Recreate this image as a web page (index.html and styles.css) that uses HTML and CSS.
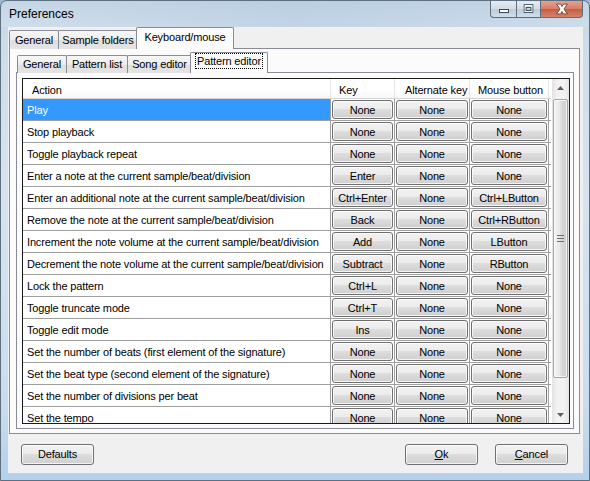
FILE: index.html
```html
<!DOCTYPE html>
<html>
<head>
<meta charset="utf-8">
<link rel="stylesheet" href="styles.css">
</head>
<body>
<div class="window">
  <div class="titlebar">
    <span class="title">Preferences</span>
    <div class="caption">
      <div class="cbtn cmin"><svg width="25" height="18" viewBox="0 0 25 18"><rect x="8.5" y="9.5" width="9" height="3" fill="#fff" stroke="#3c4650"/></svg></div>
      <div class="cbtn cmax"><svg width="24" height="18" viewBox="0 0 24 18"><rect x="7.5" y="4.5" width="9" height="8" fill="none" stroke="#3c4650"/><rect x="8.5" y="5.5" width="7" height="6" fill="none" stroke="#fff"/><rect x="9.5" y="7.5" width="5" height="3" fill="none" stroke="#3c4650"/></svg></div>
      <div class="cbtn cclose"><svg width="42" height="18" viewBox="0 0 42 18"><path d="M16 4 L20 4 L21.5 6.5 L23 4 L27 4 L23.5 9 L27 14 L23 14 L21.5 11.5 L20 14 L16 14 L19.5 9 Z" fill="#fff" stroke="#5a2a22" stroke-width="0.8"/></svg></div>
    </div>
  </div>
  <div class="client">
    <div class="tabs outer-tabs">
      <div class="tab w-gen">General</div>
      <div class="tab w-sf">Sample folders</div>
      <div class="tab sel w-km">Keyboard/mouse</div>
    </div>
    <div class="panel outer-panel">
      <div class="tabs inner-tabs">
        <div class="tab w-igen">General</div>
        <div class="tab w-pl">Pattern list</div>
        <div class="tab w-se">Song editor</div>
        <div class="tab sel w-pe"><span class="focus">Pattern editor</span></div>
      </div>
      <div class="panel inner-panel">
        <div class="table">
          <div class="list">
            <div class="row head">
              <div class="cell c-act h-act">Action</div>
              <div class="cell c-key h-key">Key</div>
              <div class="cell c-alt h-alt">Alternate key</div>
              <div class="cell c-mou h-mou">Mouse button</div>
            </div>
            <div class="row">
              <div class="cell c-act selected">Play</div>
              <div class="cell c-key"><span class="btn">None</span></div>
              <div class="cell c-alt"><span class="btn">None</span></div>
              <div class="cell c-mou"><span class="btn">None</span></div>
            </div>
            <div class="row">
              <div class="cell c-act">Stop playback</div>
              <div class="cell c-key"><span class="btn">None</span></div>
              <div class="cell c-alt"><span class="btn">None</span></div>
              <div class="cell c-mou"><span class="btn">None</span></div>
            </div>
            <div class="row">
              <div class="cell c-act">Toggle playback repeat</div>
              <div class="cell c-key"><span class="btn">None</span></div>
              <div class="cell c-alt"><span class="btn">None</span></div>
              <div class="cell c-mou"><span class="btn">None</span></div>
            </div>
            <div class="row">
              <div class="cell c-act">Enter a note at the current sample/beat/division</div>
              <div class="cell c-key"><span class="btn">Enter</span></div>
              <div class="cell c-alt"><span class="btn">None</span></div>
              <div class="cell c-mou"><span class="btn">None</span></div>
            </div>
            <div class="row">
              <div class="cell c-act">Enter an additional note at the current sample/beat/division</div>
              <div class="cell c-key"><span class="btn">Ctrl+Enter</span></div>
              <div class="cell c-alt"><span class="btn">None</span></div>
              <div class="cell c-mou"><span class="btn">Ctrl+LButton</span></div>
            </div>
            <div class="row">
              <div class="cell c-act">Remove the note at the current sample/beat/division</div>
              <div class="cell c-key"><span class="btn">Back</span></div>
              <div class="cell c-alt"><span class="btn">None</span></div>
              <div class="cell c-mou"><span class="btn">Ctrl+RButton</span></div>
            </div>
            <div class="row">
              <div class="cell c-act">Increment the note volume at the current sample/beat/division</div>
              <div class="cell c-key"><span class="btn">Add</span></div>
              <div class="cell c-alt"><span class="btn">None</span></div>
              <div class="cell c-mou"><span class="btn">LButton</span></div>
            </div>
            <div class="row">
              <div class="cell c-act">Decrement the note volume at the current sample/beat/division</div>
              <div class="cell c-key"><span class="btn">Subtract</span></div>
              <div class="cell c-alt"><span class="btn">None</span></div>
              <div class="cell c-mou"><span class="btn">RButton</span></div>
            </div>
            <div class="row">
              <div class="cell c-act">Lock the pattern</div>
              <div class="cell c-key"><span class="btn">Ctrl+L</span></div>
              <div class="cell c-alt"><span class="btn">None</span></div>
              <div class="cell c-mou"><span class="btn">None</span></div>
            </div>
            <div class="row">
              <div class="cell c-act">Toggle truncate mode</div>
              <div class="cell c-key"><span class="btn">Ctrl+T</span></div>
              <div class="cell c-alt"><span class="btn">None</span></div>
              <div class="cell c-mou"><span class="btn">None</span></div>
            </div>
            <div class="row">
              <div class="cell c-act">Toggle edit mode</div>
              <div class="cell c-key"><span class="btn">Ins</span></div>
              <div class="cell c-alt"><span class="btn">None</span></div>
              <div class="cell c-mou"><span class="btn">None</span></div>
            </div>
            <div class="row">
              <div class="cell c-act">Set the number of beats (first element of the signature)</div>
              <div class="cell c-key"><span class="btn">None</span></div>
              <div class="cell c-alt"><span class="btn">None</span></div>
              <div class="cell c-mou"><span class="btn">None</span></div>
            </div>
            <div class="row">
              <div class="cell c-act">Set the beat type (second element of the signature)</div>
              <div class="cell c-key"><span class="btn">None</span></div>
              <div class="cell c-alt"><span class="btn">None</span></div>
              <div class="cell c-mou"><span class="btn">None</span></div>
            </div>
            <div class="row">
              <div class="cell c-act">Set the number of divisions per beat</div>
              <div class="cell c-key"><span class="btn">None</span></div>
              <div class="cell c-alt"><span class="btn">None</span></div>
              <div class="cell c-mou"><span class="btn">None</span></div>
            </div>
            <div class="row">
              <div class="cell c-act">Set the tempo</div>
              <div class="cell c-key"><span class="btn">None</span></div>
              <div class="cell c-alt"><span class="btn">None</span></div>
              <div class="cell c-mou"><span class="btn">None</span></div>
            </div>
          </div>
          <div class="scrollbar">
            <div class="sb-arrow"><svg width="7" height="4" viewBox="0 0 7 4"><path d="M0 4 L3.5 0 L7 4 Z" fill="#606060"/></svg></div>
            <div class="sb-track">
              <div class="sb-thumb">
                <svg width="7" height="7" viewBox="0 0 7 7"><path d="M0 0.5 H7 M0 3.5 H7 M0 6.5 H7" stroke="#6e6e6e" stroke-width="1"/></svg>
              </div>
            </div>
            <div class="sb-arrow"><svg width="7" height="4" viewBox="0 0 7 4"><path d="M0 0 L3.5 4 L7 0 Z" fill="#606060"/></svg></div>
          </div>
        </div>
      </div>
    </div>
    <div class="footer">
      <button class="pbtn">Defaults</button>
      <div class="spacer"></div>
      <button class="pbtn"><u>O</u>k</button>
      <button class="pbtn"><u>C</u>ancel</button>
    </div>
  </div>
</div>
</body>
</html>
```

FILE: styles.css
```css
* { box-sizing: border-box; }
html, body { margin: 0; padding: 0; }
body {
  width: 590px;
  height: 481px;
  overflow: hidden;
  background: #9fb9d2;
  font-family: "Liberation Sans", Arial, sans-serif;
  font-size: 11px;
  letter-spacing: -0.15px;
  color: #000;
}
.window {
  width: 590px;
  height: 481px;
  border: 1px solid #5e6f80;
  border-radius: 7px 7px 0 0;
  background: linear-gradient(to bottom, #bcd0e3 0%, #cddcea 8%, #d7e4f0 40%, #c9dcee 85%, #b5d0ea 100%);
  display: flex;
  flex-direction: column;
  overflow: hidden;
}
.titlebar {
  height: 26px;
  display: flex;
  justify-content: space-between;
  align-items: flex-start;
  padding: 0 6px 0 8px;
  background: linear-gradient(to right, rgba(255,255,255,0.15), rgba(180,200,220,0.25) 50%, rgba(255,255,255,0.1));
}
.title {
  font-family: "Liberation Sans", Arial, sans-serif;
  font-size: 12px;
  letter-spacing: 0;
  line-height: 15px;
  padding-top: 6px;
  color: #000;
}
.caption {
  display: flex;
  margin-top: -1px;
}
.cbtn {
  height: 18px;
  border: 1px solid #5d6b7a;
  border-top: none;
  display: flex;
}
.cmin {
  width: 26px;
  border-radius: 0 0 0 4px;
  border-right: none;
  background: linear-gradient(to bottom, #e6edf4 0%, #d2dde8 50%, #bccbda 51%, #cfdde9 100%);
}
.cmax {
  width: 24px;
  border-right: none;
  background: linear-gradient(to bottom, #e6edf4 0%, #d2dde8 50%, #bccbda 51%, #cfdde9 100%);
}
.cclose {
  width: 43px;
  border-radius: 0 0 4px 0;
  background: linear-gradient(to bottom, #e8a493 0%, #d8806a 50%, #c45a3f 51%, #d4836b 100%);
}
.client {
  flex: 1;
  margin: 0 6px 7px 7px;
  background: #f0f0f0;
  padding: 0 3px 0 1px;
  display: flex;
  flex-direction: column;
}
.tabs {
  display: flex;
  align-items: flex-end;
  position: relative;
  z-index: 1;
}
.outer-tabs { height: 22px; margin-bottom: -1px; }
.inner-tabs { height: 21px; margin-bottom: -1px; padding-left: 1px; }
.tab {
  height: 19px;
  border: 1px solid #898c95;
  border-bottom: none;
  border-radius: 2px 2px 0 0;
  background: linear-gradient(to bottom, #f7f7f7 0%, #ececec 50%, #dedede 51%, #e4e4e4 100%);
  text-align: center;
  line-height: 18px;
  white-space: nowrap;
  margin-right: -1px;
}
.inner-tabs .tab { height: 18px; line-height: 17px; }
.tab.sel {
  height: 22px;
  line-height: 19px;
  background: #fbfbfb;
  margin-left: -1px;
  margin-right: 0;
  position: relative;
  z-index: 2;
  padding-bottom: 1px;
}
.inner-tabs .tab.sel { height: 21px; line-height: 17px; }
.w-gen { width: 50px; }
.w-sf { width: 80px; }
.w-km { width: 98px; }
.w-igen { width: 50px; }
.w-pl { width: 62px; }
.w-se { width: 65px; }
.w-pe { width: 78px; }
.focus {
  border: 1px dotted #000;
  padding: 0 1px;
  display: inline-block;
  line-height: 14px;
}
.panel {
  border: 1px solid #898c95;
  background: #fbfbfb;
}
.outer-panel {
  height: 386px;
  padding: 3px 5px 4px 6px;
  display: flex;
  flex-direction: column;
}
.inner-panel {
  height: 357px;
  padding: 5px 3px 4px 5px;
  display: flex;
}
.table {
  flex: 1;
  border: 1px solid #1a1a1a;
  background: #fff;
  display: flex;
  overflow: hidden;
}
.list {
  width: 528px;
  overflow: hidden;
}
.row {
  display: flex;
  height: 22px;
  border-bottom: 1px solid #a0a0a0;
}
.row.head {
  height: 20px;
  border-bottom: 1px solid #d5d5d5;
  background: linear-gradient(to bottom, #ffffff 0%, #ffffff 60%, #f6f7f8 100%);
}
.cell {
  border-right: 1px solid #a0a0a0;
  padding: 1px;
  display: flex;
  white-space: nowrap;
  overflow: hidden;
}
.head .cell {
  border-right: 1px solid #e5e5e5;
  padding: 2px 0 0 0;
  align-items: center;
  line-height: 18px;
}
.c-act { width: 308px; padding: 1px 0 0 4px; line-height: 20px; }
.c-key { width: 64px; }
.c-alt { width: 75px; }
.c-mou { width: 79px; }
.head .h-act { padding-left: 9px; }
.head .h-key { padding-left: 8px; }
.head .h-alt { padding-left: 10px; }
.head .h-mou { padding-left: 8px; }
.selected {
  background: #3399ff;
  color: #fff;
}
.btn, .pbtn {
  flex: 1;
  border: 1px solid #707070;
  border-radius: 3px;
  background: linear-gradient(to bottom, #f2f2f2 0%, #ebebeb 48%, #dddddd 50%, #cfcfcf 100%);
  box-shadow: inset 0 0 0 1px rgba(255,255,255,0.75);
  text-align: center;
  line-height: 18px;
  height: 19px;
  color: #000;
}
.scrollbar {
  width: 17px;
  margin-left: 1px;
  display: flex;
  flex-direction: column;
  background: linear-gradient(to right, #e3e3e3 0%, #f2f2f2 30%, #f2f2f2 70%, #e6e6e6 100%);
}
.sb-arrow {
  height: 17px;
  display: flex;
  align-items: center;
  justify-content: center;
}
.sb-track {
  flex: 1;
  padding: 3px 0 28px 0;
  display: flex;
}
.sb-thumb {
  flex: 1;
  margin: 0 1px;
  border: 1px solid #a5a5a5;
  border-radius: 2px;
  background: linear-gradient(to right, #f3f3f3 0%, #e8e8e8 45%, #d9d9d9 55%, #cfcfcf 100%);
  box-shadow: inset 0 0 0 1px rgba(255,255,255,0.7);
  display: flex;
  align-items: center;
  justify-content: center;
}
.footer {
  display: flex;
  padding: 10px 12px 0 12px;
  height: 39px;
}
.spacer { flex: 1; }
.pbtn {
  flex: none;
  width: 73px;
  height: 21px;
  line-height: 19px;
  font-family: "Liberation Sans", Arial, sans-serif;
  font-size: 11px;
  letter-spacing: -0.15px;
  padding: 0;
}
.pbtn + .pbtn { margin-left: 17px; }
.spacer + .pbtn { margin-left: 0; }
```
